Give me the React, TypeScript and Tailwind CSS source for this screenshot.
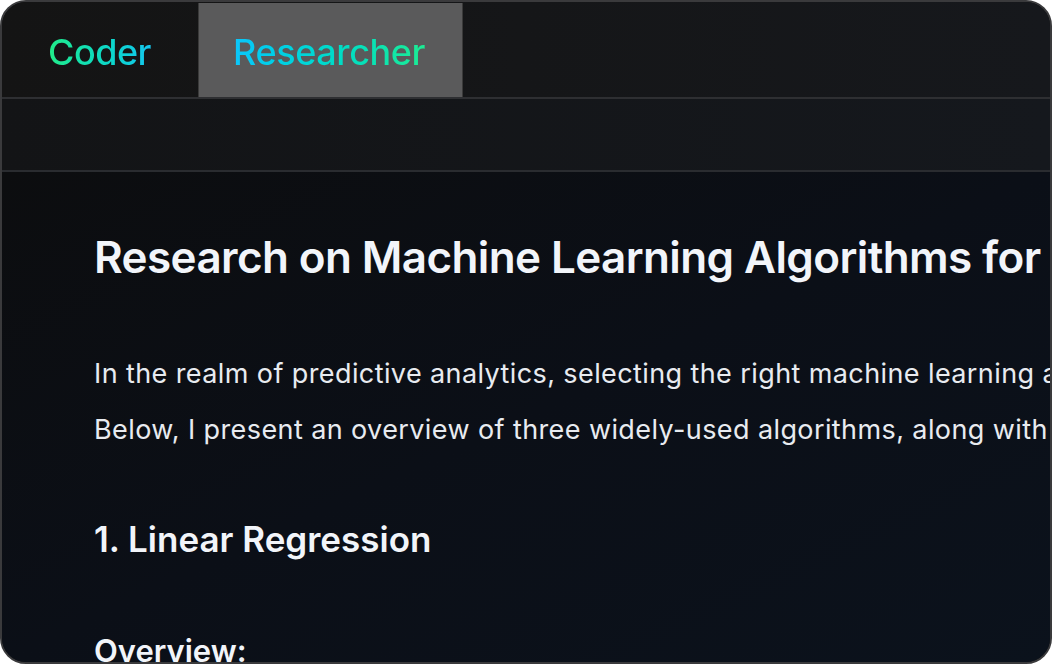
const font = { fontFamily: 'Inter, "Noto Sans", sans-serif' }

export default function App() {
	return (
		<div className="w-[1052px] h-[664px] bg-white overflow-hidden" style={font}>
			<div className="h-full flex flex-col rounded-[26px] border-2 border-[#3a3a3c] overflow-hidden bg-[#0c0d0f]">
				{/* tab bar */}
				<div className="h-[97px] shrink-0 flex items-stretch pt-[1px] border-b-2 border-[#2e2f32] bg-gradient-to-r from-[#141414] to-[#16181c]">
					<div className="w-[196px] flex items-center pl-[46px] pt-[4px]">
						<span className="text-[36px] font-medium tracking-[-0.5px] bg-gradient-to-r from-[#22ec88] to-[#16c6ee] bg-clip-text text-transparent">
							Coder
						</span>
					</div>
					<div className="w-[265px] flex items-center pl-[34px] pt-[4px] bg-[#5a5a5b] border-l border-r border-[#3a3a3a]">
						<span className="text-[36px] font-medium tracking-[-0.4px] bg-gradient-to-r from-[#0cc6fb] to-[#1ceb93] bg-clip-text text-transparent">
							Researcher
						</span>
					</div>
				</div>
				{/* toolbar */}
				<div className="h-[73px] shrink-0 border-b-2 border-[#2a2c30] bg-gradient-to-r from-[#131416] to-[#15181d]" />
				{/* document */}
				<div className="flex-1 bg-gradient-to-br from-[#0c0d0f] via-[#0b0f17] to-[#0b121c] pl-[92px] pt-[57px] whitespace-nowrap overflow-hidden text-[#f2f5fa]">
					<h1 className="text-[44px] font-semibold leading-[56px] tracking-[-0.6px]">
						Research on Machine Learning Algorithms for Predictive Analytics
					</h1>
					<p className="mt-[61px] text-[27px] leading-[56px] tracking-[0.4px] text-[#e8ebf0]">
						In the realm of predictive analytics, selecting the right machine learning algorithm is crucial.
						<br />
						Below, I present an overview of three widely-used algorithms, along with their strengths.
					</p>
					<h2 className="mt-[59px] text-[35px] font-semibold leading-[44px]">1. Linear Regression</h2>
					<h3 className="mt-[69px] text-[31px] font-semibold leading-[42px]">Overview:</h3>
				</div>
			</div>
		</div>
	)
}
